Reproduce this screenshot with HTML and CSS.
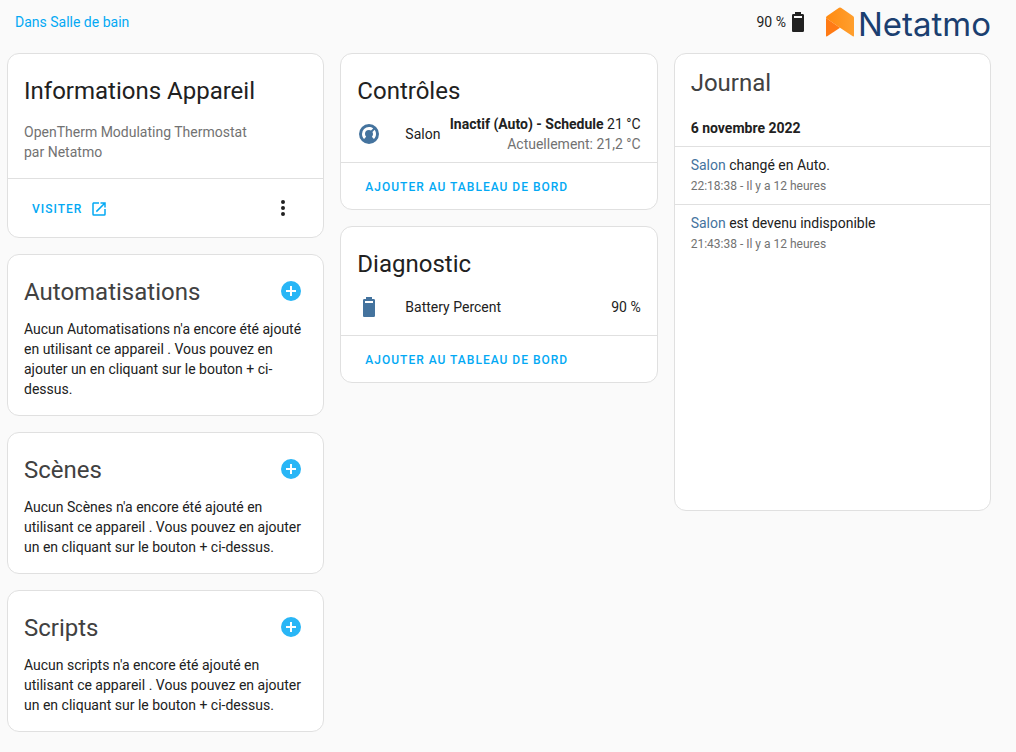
FILE: index.html
```
<!DOCTYPE html>
<html lang="fr">
<head>
	<meta charset="utf-8">
	<meta name="viewport" content="width=device-width, initial-scale=1">
	<title>OpenTherm Modulating Thermostat</title>
	<link rel="stylesheet" href="styles.css">
</head>
<body>

	<!-- shared icons -->
	<svg class="sprite" aria-hidden="true">
		<symbol id="battery" viewBox="0 0 24 24"><path d="M16,8H8V6H16M16.67,4H15V2H9V4H7.33A1.33,1.33 0 0,0 6,5.33V20.67C6,21.4 6.6,22 7.33,22H16.67A1.33,1.33 0 0,0 18,20.67V5.33C18,4.6 17.4,4 16.67,4Z"/></symbol>
		<symbol id="plus-circle" viewBox="0 0 24 24"><path d="M17,13H13V17H11V13H7V11H11V7H13V11H17M12,2A10,10 0 0,0 2,12A10,10 0 0,0 12,22A10,10 0 0,0 22,12A10,10 0 0,0 12,2Z"/></symbol>
	</svg>

	<header class="device-header">
		<a class="area" href="#area">Dans Salle de bain</a>
		<div class="header-right">
			<div class="battery">90 % <svg class="icon"><use href="#battery"/></svg></div>
			<div class="logo">
				<svg class="logo-mark" viewBox="0 0 28 30" aria-hidden="true">
					<defs>
						<linearGradient id="fold" x1="0" y1="0" x2="1" y2="0">
							<stop offset="0" stop-color="#ff8a10"/>
							<stop offset="1" stop-color="#ff9f2e"/>
						</linearGradient>
					</defs>
					<path fill="url(#fold)" d="M13,0.8Q14,0 15,0.8L27.3,9.2Q28,9.8 28,10.8V28.6Q28,30 26.8,29.3L14,20.8L0,11Q0,9.8 0.7,9.2Z"/>
					<path fill="#ff7a14" d="M0,11L14,20.8L1.2,29.3Q0,30 0,28.6Z"/>
				</svg>
				<span class="logo-name">Netatmo</span>
			</div>
		</div>
	</header>

	<main class="columns">

		<div class="column">
			<section class="card">
				<h1 class="card-header">Informations Appareil</h1>
				<div class="card-content device-info">
					<div>OpenTherm Modulating Thermostat</div>
					<div>par Netatmo</div>
				</div>
				<div class="card-actions info-actions">
					<a class="action" href="#visit">Visiter
						<svg class="icon-small" viewBox="0 0 24 24"><path d="M14,3V5H17.59L7.76,14.83L9.17,16.24L19,6.41V10H21V3M19,19H5V5H12V3H5C3.89,3 3,3.9 3,5V19A2,2 0 0,0 5,21H19A2,2 0 0,0 21,19V12H19V19Z"/></svg>
					</a>
					<button class="icon-button" type="button" aria-label="Menu">
						<svg class="icon" viewBox="0 0 24 24"><path d="M12,16A2,2 0 0,1 14,18A2,2 0 0,1 12,20A2,2 0 0,1 10,18A2,2 0 0,1 12,16M12,10A2,2 0 0,1 14,12A2,2 0 0,1 12,14A2,2 0 0,1 10,12A2,2 0 0,1 12,10M12,4A2,2 0 0,1 14,6A2,2 0 0,1 12,8A2,2 0 0,1 10,6A2,2 0 0,1 12,4Z"/></svg>
					</button>
				</div>
			</section>

			<section class="card">
				<div class="card-header with-button">
					<h1>Automatisations</h1>
					<button class="icon-button add" type="button" aria-label="Ajouter une automatisation"><svg class="icon"><use href="#plus-circle"/></svg></button>
				</div>
				<p class="card-content">Aucun Automatisations n'a encore été ajouté en utilisant ce appareil . Vous pouvez en ajouter un en cliquant sur le bouton + ci-dessus.</p>
			</section>

			<section class="card">
				<div class="card-header with-button">
					<h1>Scènes</h1>
					<button class="icon-button add" type="button" aria-label="Ajouter une scène"><svg class="icon"><use href="#plus-circle"/></svg></button>
				</div>
				<p class="card-content">Aucun Scènes n'a encore été ajouté en utilisant ce appareil . Vous pouvez en ajouter un en cliquant sur le bouton + ci-dessus.</p>
			</section>

			<section class="card">
				<div class="card-header with-button">
					<h1>Scripts</h1>
					<button class="icon-button add" type="button" aria-label="Ajouter un script"><svg class="icon"><use href="#plus-circle"/></svg></button>
				</div>
				<p class="card-content">Aucun scripts n'a encore été ajouté en utilisant ce appareil . Vous pouvez en ajouter un en cliquant sur le bouton + ci-dessus.</p>
			</section>
		</div>

		<div class="column">
			<section class="card">
				<h1 class="card-header">Contrôles</h1>
				<div class="entity">
					<svg class="icon state-icon" viewBox="0 0 24 24"><path d="M16.95,16.95L14.83,14.83C15.55,14.1 16,13.1 16,12C16,11.26 15.79,10.57 15.43,10L17.6,7.81C18.5,9 19,10.43 19,12C19,13.93 18.22,15.68 16.95,16.95M12,5C13.57,5 15,5.5 16.19,6.4L14,8.56C13.43,8.21 12.74,8 12,8A4,4 0 0,0 8,12C8,13.1 8.45,14.1 9.17,14.83L7.05,16.95C5.78,15.68 5,13.93 5,12A7,7 0 0,1 12,5M12,2A10,10 0 0,0 2,12A10,10 0 0,0 12,22A10,10 0 0,0 22,12A10,10 0 0,0 12,2Z"/></svg>
					<span class="entity-name">Salon</span>
					<div class="entity-state">
						<div><b>Inactif (Auto) - Schedule</b> 21 °C</div>
						<div class="secondary">Actuellement: 21,2 °C</div>
					</div>
				</div>
				<div class="card-actions">
					<button class="action" type="button">Ajouter au tableau de bord</button>
				</div>
			</section>

			<section class="card">
				<h1 class="card-header">Diagnostic</h1>
				<div class="entity">
					<svg class="icon state-icon"><use href="#battery"/></svg>
					<span class="entity-name">Battery Percent</span>
					<div class="entity-state">90 %</div>
				</div>
				<div class="card-actions">
					<button class="action" type="button">Ajouter au tableau de bord</button>
				</div>
			</section>
		</div>

		<div class="column">
			<section class="card">
				<h1 class="card-header log-header">Journal</h1>
				<div class="log">
					<h4 class="date">6 novembre 2022</h4>
					<div class="entry">
						<div><a href="#salon">Salon</a> changé en Auto.</div>
						<div class="time">22:18:38 - Il y a 12 heures</div>
					</div>
					<div class="entry">
						<div><a href="#salon">Salon</a> est devenu indisponible</div>
						<div class="time">21:43:38 - Il y a 12 heures</div>
					</div>
				</div>
			</section>
		</div>

	</main>

</body>
</html>
```
FILE: styles.css
```
* {
	box-sizing: border-box;
}

body {
	margin: 0;
	padding: 0 25px 20px 7px;
	background: #fafafa;
	color: #212121;
	font-family: Roboto, "Noto Sans", sans-serif;
	font-size: 14px;
	line-height: 20px;
}

h1, h4, p {
	margin: 0;
}

a {
	color: #03a9f4;
	text-decoration: none;
}

button {
	border: 0;
	background: none;
	color: inherit;
	font-family: inherit;
	cursor: pointer;
}

svg {
	display: block;
	fill: currentColor;
}

.sprite {
	display: none;
}

.icon {
	flex: none;
	width: 24px;
	height: 24px;
}

.icon-small {
	width: 18px;
	height: 18px;
}

/* ----------- Header ----------- */
.device-header {
	display: flex;
	align-items: center;
	justify-content: space-between;
	height: 44px;
	margin-bottom: 9px;
	padding-left: 8px;
}

.header-right {
	display: flex;
	align-items: center;
	gap: 16px;
}

.battery {
	display: flex;
	align-items: center;
}

.logo {
	display: flex;
	align-items: center;
	gap: 4px;
}

.logo-mark {
	width: 28px;
	height: 30px;
}

.logo-name {
	padding-top: 4px;
	color: #1b3f70;
	font-family: Inter, sans-serif;
	font-size: 33px;
	line-height: 40px;
}

/* ----------- Cards ----------- */
.columns {
	display: grid;
	grid-template-columns: repeat(3, minmax(0, 1fr));
	align-items: start;
	gap: 16px;
}

.column {
	display: grid;
	gap: 16px;
}

.card {
	border: 1px solid #e0e0e0;
	border-radius: 12px;
	background: #fff;
}

.card-header,
.card-header h1 {
	font-size: 24px;
	font-weight: 400;
	line-height: 50px;
}

.card-header {
	padding: 12px 16px 0;
}

.with-button {
	display: flex;
	justify-content: space-between;
	padding-right: 8px;
	color: #414141;
}

.card-content {
	padding: 2px 16px 16px;
}

.device-info {
	padding-top: 6px;
	color: #727272;
}

.card-actions {
	display: flex;
	align-items: center;
	padding: 5px 8px;
	border-top: 1px solid #e0e0e0;
}

.info-actions {
	justify-content: space-between;
	padding-right: 16px;
}

.action {
	display: flex;
	align-items: center;
	gap: 8px;
	height: 36px;
	padding: 1px 16px 0;
	color: #03a9f4;
	font-size: 12px;
	font-weight: 500;
	letter-spacing: 1px;
	text-transform: uppercase;
}

.icon-button {
	width: 48px;
	height: 48px;
	padding: 12px;
}

.add {
	color: #29b6f6;
}

/* ----------- Entities ----------- */
.entity {
	display: flex;
	align-items: center;
	min-height: 40px;
	margin-bottom: 8px;
	padding: 0 16px;
}

.card-header + .entity {
	margin-top: -2px;
}

.state-icon {
	color: #44739e;
}

.entity-name {
	flex: 1;
	margin-left: 24px;
}

.entity-state {
	text-align: right;
}

.secondary {
	color: #727272;
}

/* ----------- Logbook ----------- */
.log-header {
	padding-top: 4px;
}

.log-header,
.log-header h1 {
	color: #414141;
}

.log {
	min-height: 402px;
}

.date {
	padding: 10px 16px 8px;
	font-size: 14px;
	font-weight: 700;
}

.entry {
	padding: 8px 16px;
	border-top: 1px solid #e0e0e0;
}

.entry a {
	color: #44739e;
}

.time {
	padding-top: 1px;
	color: #727272;
	font-size: 12px;
	line-height: 20px;
}
```
